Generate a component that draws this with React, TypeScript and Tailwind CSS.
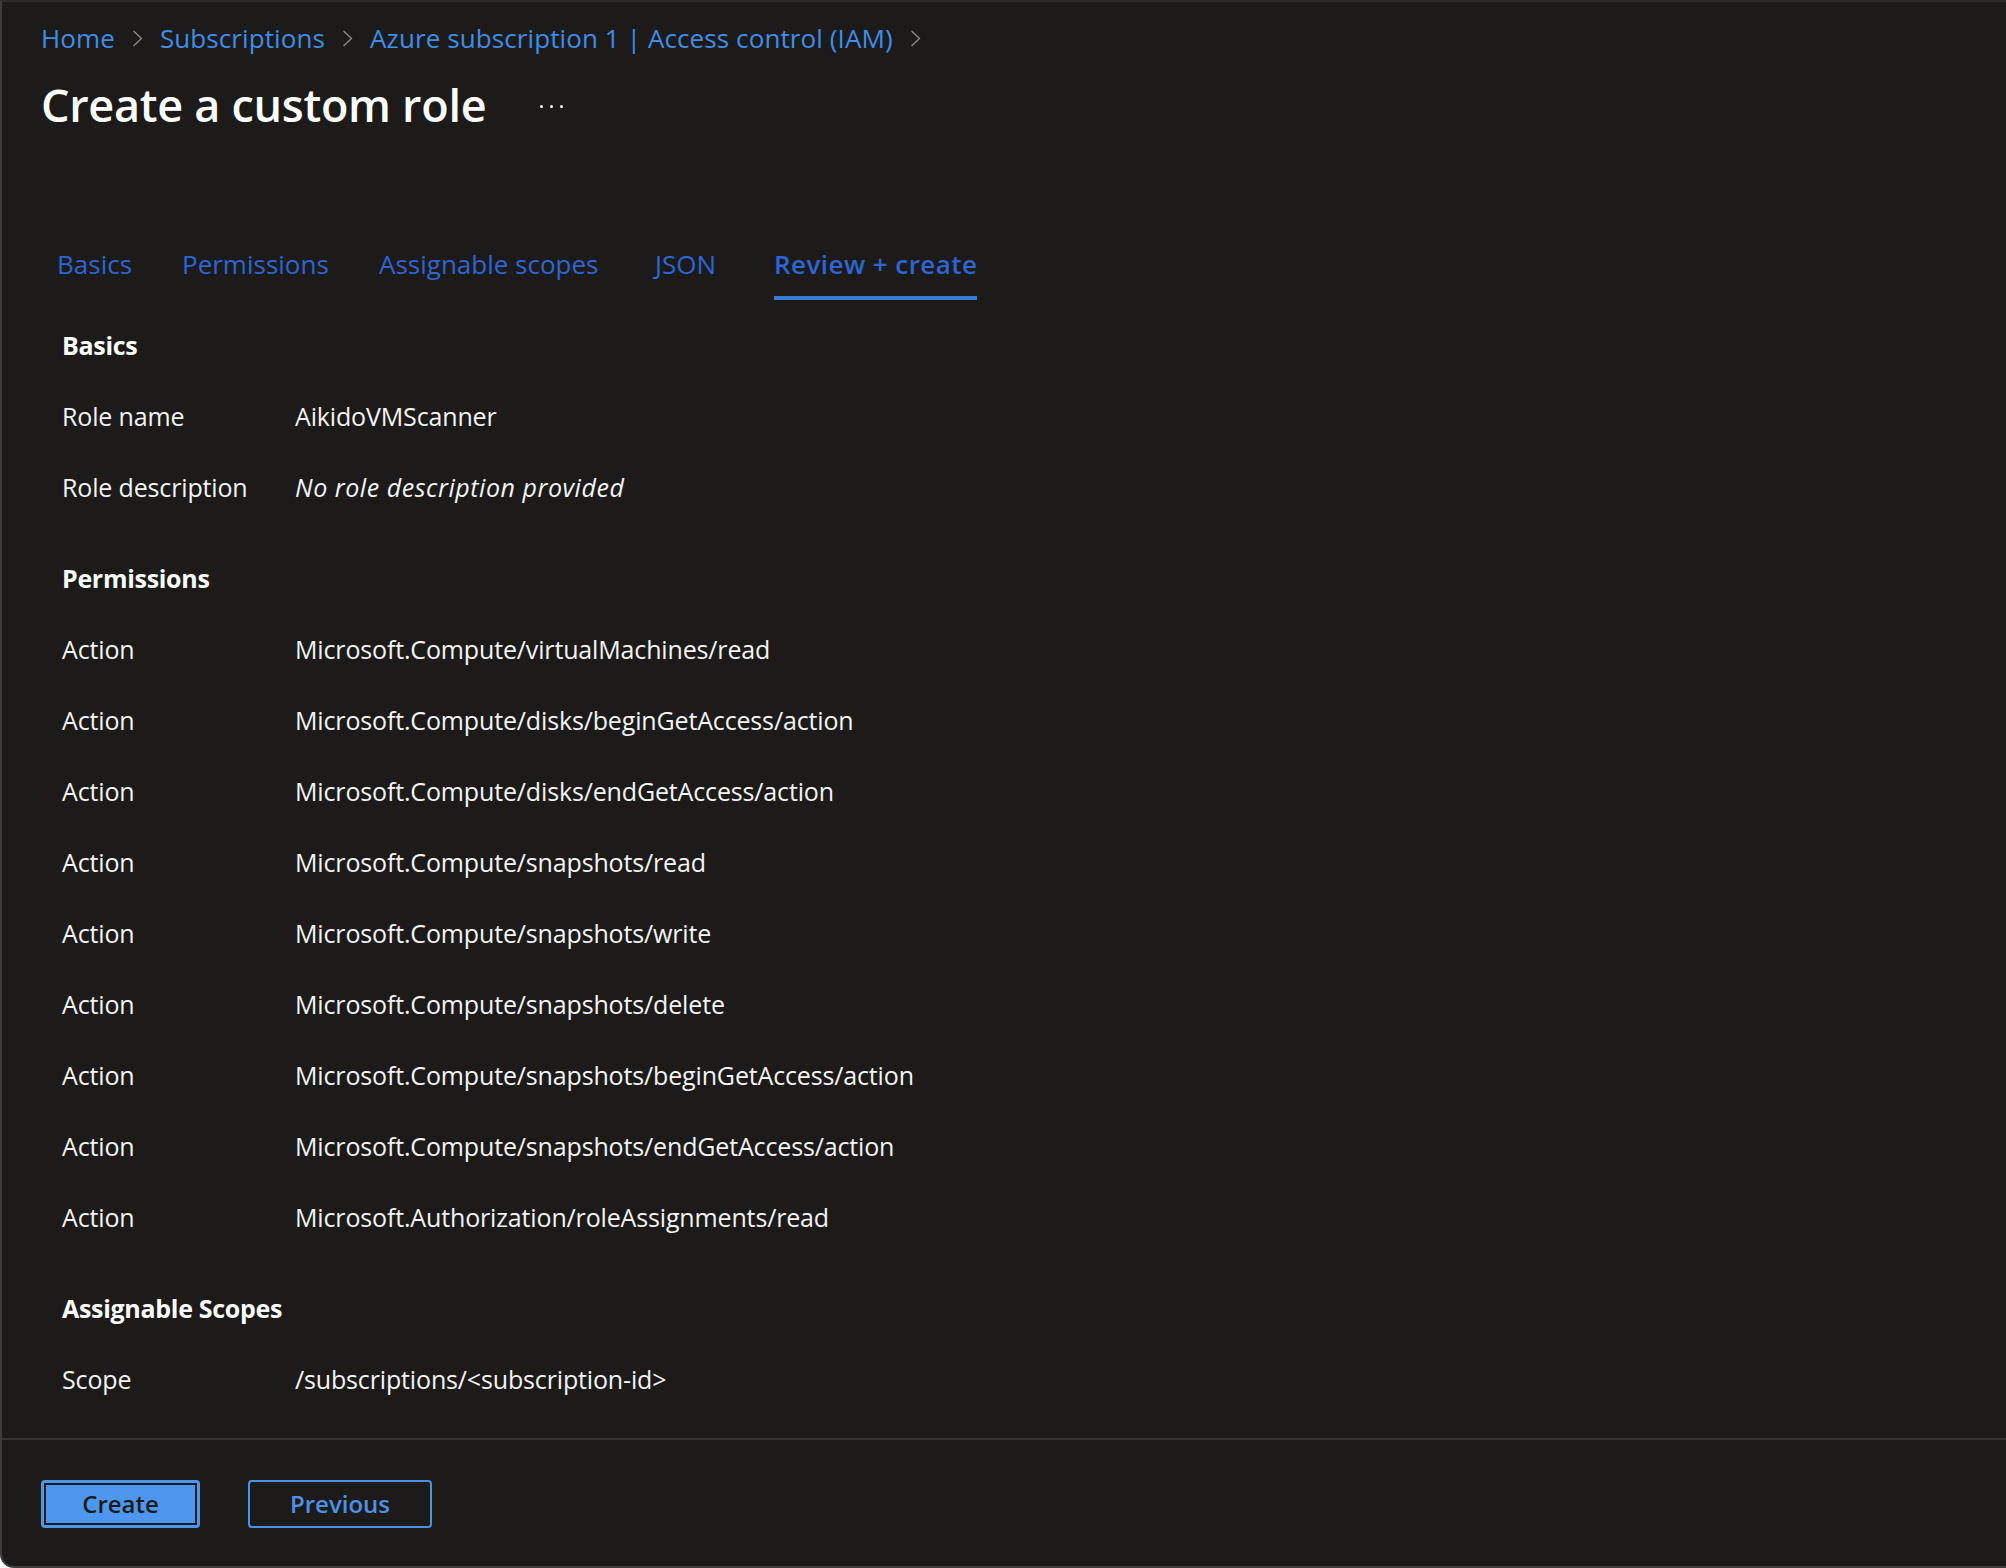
import { Fragment } from "react";

const crumbs = [
  "Home",
  "Subscriptions",
  "Azure subscription 1 | Access control (IAM)",
];

const tabs = [
  { label: "Basics", width: "w-[73px]", active: false },
  { label: "Permissions", width: "w-[145px]", active: false },
  { label: "Assignable scopes", width: "w-[224px]", active: false },
  { label: "JSON", width: "w-[67px]", active: false },
  { label: "Review + create", width: "w-[203px]", active: true },
];

const actions = [
  "Microsoft.Compute/virtualMachines/read",
  "Microsoft.Compute/disks/beginGetAccess/action",
  "Microsoft.Compute/disks/endGetAccess/action",
  "Microsoft.Compute/snapshots/read",
  "Microsoft.Compute/snapshots/write",
  "Microsoft.Compute/snapshots/delete",
  "Microsoft.Compute/snapshots/beginGetAccess/action",
  "Microsoft.Compute/snapshots/endGetAccess/action",
  "Microsoft.Authorization/roleAssignments/read",
];

function Chevron() {
  return (
    <svg width="11" height="17" viewBox="0 0 11 17" className="shrink-0">
      <polyline
        points="1.5,1 9.5,8.5 1.5,16"
        fill="none"
        stroke="#8c8c8c"
        strokeWidth="1.3"
      />
    </svg>
  );
}

function Row({ label, value, italic }: { label: string; value: string; italic?: boolean }) {
  return (
    <div className="flex h-[71px] items-center text-[25px] tracking-[-0.15px] text-[#f4f4f4]">
      <div className="w-[233px] shrink-0">{label}</div>
      <div className={italic ? "italic tracking-[0.55px]" : ""}>{value}</div>
    </div>
  );
}

function SectionTitle({ children }: { children: string }) {
  return (
    <div className="flex h-[71px] items-center text-[25px] font-bold tracking-[-0.3px] text-white">
      {children}
    </div>
  );
}

export default function App() {
  return (
    <div
      className="flex h-[1568px] w-full flex-col rounded-bl-[14px] border-t-2 border-b-2 border-l-2 border-t-[#2b2a29] border-b-[#3c3c3c] border-l-[#3c3c3c] bg-[#1c1b1a]"
      style={{ fontFamily: '"Open Sans", "Noto Sans", sans-serif' }}
    >
      <div className="pl-[39px]">
        {/* Breadcrumb */}
        <div className="mt-[18px] flex h-[36px] items-center gap-[17px] text-[26px] tracking-[0.1px] text-[#3d8ee8]">
          {crumbs.map((c) => (
            <Fragment key={c}>
              <span>{c}</span>
              <Chevron />
            </Fragment>
          ))}
        </div>

        {/* Title */}
        <div className="mt-[21px] flex h-[56px] items-center">
          <h1 className="text-[45px] font-semibold tracking-[-0.3px] text-white">Create a custom role</h1>
          <div className="ml-[54px] flex items-center gap-[7px] pt-[2px]">
            <span className="h-[3px] w-[3px] rounded-full bg-white" />
            <span className="h-[3px] w-[3px] rounded-full bg-white" />
            <span className="h-[3px] w-[3px] rounded-full bg-white" />
          </div>
        </div>

        {/* Tabs */}
        <div className="mt-[112px] ml-[16px] flex gap-[52px]">
          {tabs.map((t) => (
            <div
              key={t.label}
              className={
                t.active
                  ? `${t.width} flex h-[55px] items-start whitespace-nowrap border-b-4 border-[#3a7bd3] pt-[1px] text-[26px] font-semibold leading-[36px] tracking-[0.45px] text-[#2d66d4]`
                  : `${t.width} flex h-[55px] items-start whitespace-nowrap border-b-4 border-transparent pt-[1px] text-[26px] leading-[36px] text-[#2d66d4]`
              }
            >
              {t.label}
            </div>
          ))}
        </div>

        {/* Review content */}
        <div className="mt-[10px] pl-[21px]">
          <SectionTitle>Basics</SectionTitle>
          <Row label="Role name" value="AikidoVMScanner" />
          <Row label="Role description" value="No role description provided" italic />

          <div className="mt-[20px]">
            <SectionTitle>Permissions</SectionTitle>
            {actions.map((a) => (
              <Row key={a} label="Action" value={a} />
            ))}
          </div>

          <div className="mt-[20px]">
            <SectionTitle>Assignable Scopes</SectionTitle>
            <Row label="Scope" value="/subscriptions/<subscription-id>" />
          </div>
        </div>
      </div>

      {/* Footer */}
      <div className="mt-[23px] border-t-2 border-[#333333] pt-[40px] pl-[39px]">
        <div className="flex gap-[48px]">
          <button className="h-[48px] w-[159px] rounded-[4px] bg-[#4e97ee] p-[3px]">
            <div className="flex h-full w-full items-center justify-center border-2 border-[#1b1b1a] text-[24px] font-semibold text-[#1b1b1a]">
              Create
            </div>
          </button>
          <button className="flex h-[48px] w-[184px] items-center justify-center rounded-[4px] border-2 border-[#4b92e6] text-[24px] font-semibold text-[#4b92e6]">
            Previous
          </button>
        </div>
      </div>
    </div>
  );
}
